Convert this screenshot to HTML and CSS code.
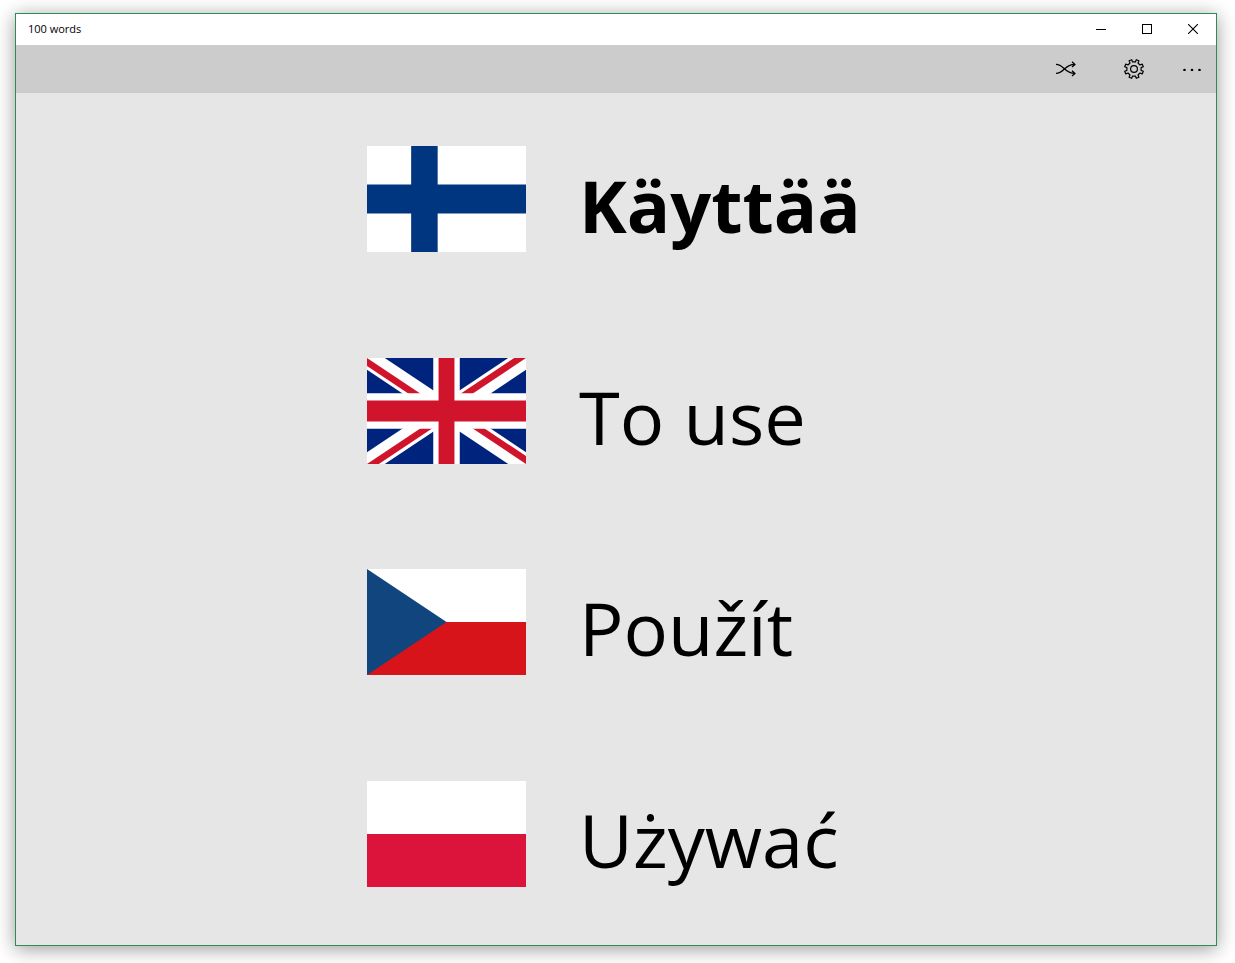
FILE: index.html
```html
<!DOCTYPE html>
<html lang="en">
<head>
<meta charset="utf-8">
<title>100 words</title>
<link rel="stylesheet" href="styles.css">
</head>
<body>
<div class="window">
  <header class="titlebar">
    <h1 class="title">100 words</h1>
    <button class="caption-button" type="button" aria-label="Minimize">
      <svg width="10" height="10" viewBox="0 0 10 10" shape-rendering="crispEdges"><path d="M0 5h10v1H0z"/></svg>
    </button>
    <button class="caption-button" type="button" aria-label="Maximize">
      <svg width="10" height="10" viewBox="0 0 10 10" shape-rendering="crispEdges"><path d="M0 0h10v10H0zM1 1v8h8V1z" fill-rule="evenodd"/></svg>
    </button>
    <button class="caption-button" type="button" aria-label="Close">
      <svg width="10" height="10" viewBox="0 0 10 10"><path d="M0 0l10 10M10 0L0 10" fill="none" stroke="#000" stroke-width="1.1"/></svg>
    </button>
  </header>
  <nav class="commandbar" aria-label="Commands">
    <button class="command" type="button" aria-label="Shuffle">
      <svg width="20" height="20" viewBox="0 0 20 20" fill="none" stroke="#000" stroke-width="1.3"><path d="M0 5.4C8 5.4 8.500 14.400 18.500 14.400M0 14.400C8 14.400 8.500 5.400 18.500 5.400M16 2.800L18.900 5.400L16 8M16 11.800L18.900 14.400L16 17"/></svg>
    </button>
    <button class="command" type="button" aria-label="Settings">
      <svg width="20" height="20" viewBox="0 0 20 20" fill="none" stroke="#000" stroke-width="1.2"><path d="M11.400 2.900L12.300 0.700L14.900 1.800L14 4L16 6L18.200 5.100L19.300 7.700L17.100 8.600V11.400L19.300 12.300L18.200 14.900L16 14L14 16L14.900 18.200L12.300 19.300L11.400 17.100H8.600L7.700 19.300L5.100 18.200L6 16L4 14L1.800 14.900L0.700 12.300L2.900 11.400V8.600L0.700 7.700L1.800 5.100L4 6L6 4L5.100 1.800L7.700 0.700L8.600 2.900Z" stroke-linejoin="round"/><circle cx="10" cy="10" r="3.400"/></svg>
    </button>
    <button class="command command-more" type="button" aria-label="More">
      <svg width="18" height="4" viewBox="0 0 18 4"><circle cx="1.500" cy="3" r="1.300"/><circle cx="9" cy="3" r="1.300"/><circle cx="16.500" cy="3" r="1.300"/></svg>
    </button>
  </nav>
  <main>
    <ul class="words">
      <li class="word word-main">
        <svg class="flag" viewBox="0 0 18 11" preserveAspectRatio="none" role="img" aria-label="Finnish">
          <path fill="#fff" d="M0 0h18v11H0z"/><path fill="#003580" d="M0 4h5V0h3v4h10v3H8v4H5V7H0z"/>
        </svg>
        <span lang="fi">Käyttää</span>
      </li>
      <li class="word">
        <svg class="flag" viewBox="0 0 60 30" preserveAspectRatio="none" role="img" aria-label="English">
          <clipPath id="saltire"><path d="M30 15h30v15zM30 15v15H0zM30 15H0V0zM30 15V0h30z"/></clipPath>
          <path fill="#00247d" d="M0 0h60v30H0z"/>
          <path stroke="#fff" stroke-width="6" d="M0 0l60 30M60 0L0 30"/>
          <path stroke="#cf142b" stroke-width="4" clip-path="url(#saltire)" d="M0 0l60 30M60 0L0 30"/>
          <path stroke="#fff" stroke-width="10" d="M30 0v30M0 15h60"/>
          <path stroke="#cf142b" stroke-width="6" d="M30 0v30M0 15h60"/>
        </svg>
        <span lang="en">To use</span>
      </li>
      <li class="word">
        <svg class="flag" viewBox="0 0 6 4" preserveAspectRatio="none" role="img" aria-label="Czech">
          <path fill="#fff" d="M0 0h6v2H0z"/><path fill="#d7141a" d="M0 2h6v2H0z"/><path fill="#11457e" d="M0 0l3 2l-3 2z"/>
        </svg>
        <span lang="cs">Použít</span>
      </li>
      <li class="word">
        <svg class="flag" viewBox="0 0 6 4" preserveAspectRatio="none" role="img" aria-label="Polish">
          <path fill="#fff" d="M0 0h6v2H0z"/><path fill="#dc143c" d="M0 2h6v2H0z"/>
        </svg>
        <span lang="pl">Używać</span>
      </li>
    </ul>
  </main>
</div>
</body>
</html>
```
FILE: styles.css
```css
* {
  box-sizing: border-box;
}

body {
  display: flex;
  min-height: 100vh;
  margin: 0;
  padding: 13px 18px 17px 15px;
  background: #fff;
  color: #000;
  font-family: "Segoe UI", "Open Sans", "Noto Sans", sans-serif;
}

.window {
  display: flex;
  flex: 1;
  flex-direction: column;
  border: 1px solid #2e8b57;
  background: #e6e6e6;
  box-shadow: 0 3px 18px rgba(0, 0, 0, 0.4);
}

.titlebar {
  display: flex;
  height: 31px;
  padding-left: 12px;
  background: #fff;
}

.title {
  flex: 1;
  margin: 0;
  font-size: 11px;
  font-weight: 400;
  line-height: 30px;
}

button {
  display: flex;
  align-items: center;
  justify-content: center;
  padding: 0;
  border: 0;
  background: none;
}

.caption-button {
  width: 46px;
  padding-bottom: 1px;
}

.commandbar {
  display: flex;
  justify-content: flex-end;
  height: 48px;
  background: #ccc;
}

.command {
  width: 68px;
}

.command-more {
  width: 48px;
}

main {
  display: flex;
  flex: 1;
}

.words {
  display: grid;
  flex: 1;
  grid-auto-rows: 1fr;
  margin: 0;
  padding: 0 0 5px;
  list-style: none;
}

.word {
  display: grid;
  grid-template-columns: 42.5% 1fr;
  column-gap: 53px;
  align-items: center;
  font-size: 74px;
  line-height: 104px;
}

.word-main {
  font-size: 72px;
  font-weight: 700;
}

.word span {
  padding-top: 12px;
}

.flag {
  justify-self: end;
  width: 159px;
  height: 106px;
}
```
